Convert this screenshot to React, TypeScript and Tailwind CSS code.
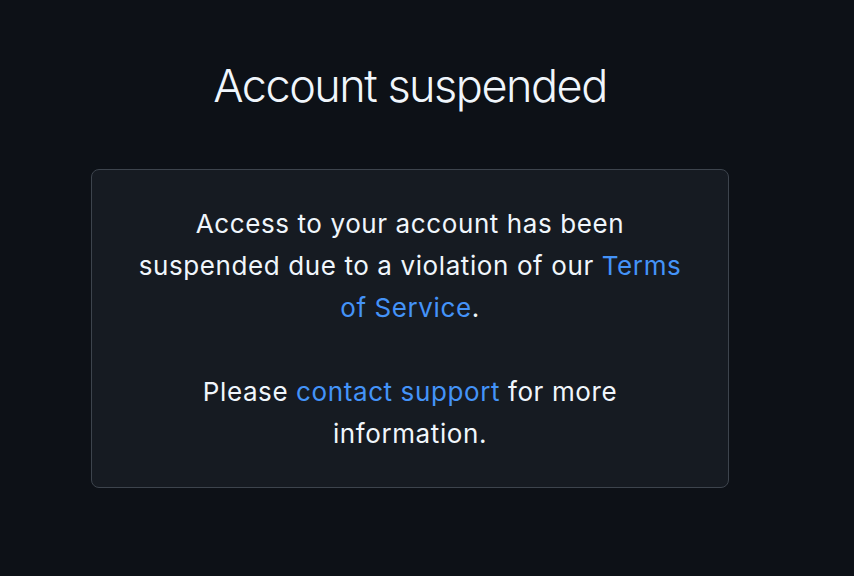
export default function App() {
  return (
    <div
      className="min-h-screen w-full bg-[#0d1117] text-[#f0f6fc] pr-[34px]"
      style={{ fontFamily: "Inter, 'Noto Sans', sans-serif" }}
    >
      <div className="flex flex-col items-center pt-[58px]">
        <h1 className="text-[45px] leading-[56px] font-light tracking-[-1.5px]">
          Account suspended
        </h1>
        <div className="mt-[55px] w-[638px] rounded-lg border border-[#3d444d] bg-[#161b22] px-[44px] pt-[33px] pb-[32px] text-center text-[26px] leading-[42px] tracking-[0.6px]">
          <p>
            Access to your account has been suspended due to a violation of our{" "}
            <a href="#" className="text-[#4493f8]">
              Terms of Service
            </a>
            .
          </p>
          <p className="mt-[42px]">
            Please{" "}
            <a href="#" className="text-[#4493f8]">
              contact support
            </a>{" "}
            for more information.
          </p>
        </div>
      </div>
    </div>
  );
}
